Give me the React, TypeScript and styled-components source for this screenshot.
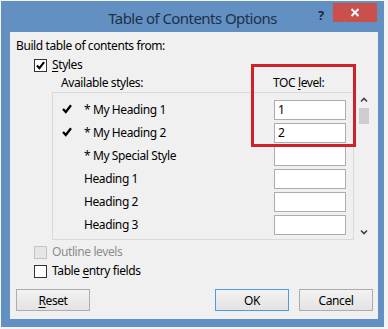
import React from "react";
import styled, { createGlobalStyle } from "styled-components";

const Global = createGlobalStyle`
  html, body { margin: 0; padding: 0; background: #f4f4f4; }
  body { font-family: "Noto Sans", "Liberation Sans", sans-serif; }
`;

const FONT = `"Noto Sans", "Liberation Sans", sans-serif`;

const Frame = styled.div`
  width: 383px;
  height: 326px;
  margin: 1px 0 0 1px;
  background: #6290c2;
  display: flex;
  flex-direction: column;
`;

const TitleBar = styled.div`
  height: 31px;
  flex: none;
  display: grid;
  grid-template-columns: 1fr auto 1fr;
  align-items: start;
`;

const Title = styled.div`
  grid-column: 2;
  font: 15px ${FONT};
  letter-spacing: -0.55px;
  color: #1d3148;
  line-height: 18px;
  padding-top: 8px;
  white-space: nowrap;
`;

const Controls = styled.div`
  grid-column: 3;
  justify-self: end;
  display: flex;
  align-items: start;
  padding: 2px 7px 0 0;
`;

const Help = styled.div`
  width: 24px;
  height: 19px;
  display: flex;
  align-items: center;
  justify-content: center;
  font: bold 13px ${FONT};
  color: #1d2b3a;
  padding-top: 4px;
  box-sizing: border-box;
`;

const Close = styled.div`
  width: 44px;
  height: 19px;
  background: #c9504b;
  display: flex;
  align-items: center;
  justify-content: center;
`;

const Body = styled.div`
  flex: 1;
  display: flex;
  padding: 0 9px 8px 9px;
`;

const Panel = styled.div`
  flex: 1;
  position: relative;
  background: #f0f0f0;
  display: flex;
  flex-direction: column;
  padding: 6px 5px 7px 6px;
  font: 12px ${FONT};
  letter-spacing: -0.4px;
  color: #000;
  & > * { flex: none; }
`;

const Line = styled.div<{ $mt?: number; $ml?: number; $disabled?: boolean }>`
  height: 16px;
  line-height: 16px;
  display: flex;
  align-items: center;
  margin-top: ${(p) => p.$mt ?? 0}px;
  margin-left: ${(p) => p.$ml ?? 0}px;
  color: ${(p) => (p.$disabled ? "#8c8c8c" : "#000")};
  white-space: nowrap;
`;

const Box = styled.span<{ $disabled?: boolean }>`
  width: 11px;
  height: 11px;
  border: 1px solid ${(p) => (p.$disabled ? "#c4c4c4" : "#333")};
  background: ${(p) => (p.$disabled ? "#e6e6e6" : "#fff")};
  display: inline-flex;
  align-items: center;
  justify-content: center;
  margin-right: 5px;
  flex: none;
`;

const Header = styled.div`
  height: 16px;
  line-height: 16px;
  margin-top: 2px;
  display: flex;
  white-space: nowrap;
`;

const HeaderLeft = styled.span`
  margin-left: 45px;
  width: 212px;
`;

const ListWrap = styled.div`
  margin-top: 1px;
  margin-left: 36px;
  display: flex;
`;

const ListBox = styled.div`
  width: 302px;
  height: 148px;
  border: 1px solid #d9d9d9;
  padding-top: 5px;
  box-sizing: border-box;
  display: flex;
  flex-direction: column;
  overflow: hidden;
`;

const Row = styled.div`
  height: 23px;
  flex: none;
  display: grid;
  grid-template-columns: 22px 1fr 72px;
  align-items: center;
  padding: 0 7px 0 9px;
  box-sizing: border-box;
  white-space: nowrap;
`;

const LevelInput = styled.div`
  height: 20px;
  box-sizing: border-box;
  border: 1px solid #abadb3;
  background: #fff;
  padding-left: 3px;
  line-height: 18px;
`;

const ScrollBar = styled.div`
  width: 18px;
  height: 148px;
  display: flex;
  flex-direction: column;
  align-items: center;
  margin-left: 1px;
`;

const Arrow = styled.div`
  height: 16px;
  display: flex;
  align-items: center;
  justify-content: center;
  width: 18px;
`;

const Track = styled.div`
  flex: 1;
  width: 18px;
  display: flex;
  flex-direction: column;
  align-items: center;
`;

const Thumb = styled.div`
  width: 10px;
  height: 16px;
  background: #cdcdcd;
`;

const Buttons = styled.div`
  margin-top: 10px;
  display: flex;
  gap: 10px;
`;

const Button = styled.div<{ $default?: boolean }>`
  width: 74px;
  height: 22px;
  box-sizing: border-box;
  border: 1px solid ${(p) => (p.$default ? "#4d9be0" : "#adadad")};
  background: linear-gradient(#f2f2f2, #e3e3e3);
  display: flex;
  align-items: center;
  justify-content: center;
  &:first-child { margin-right: auto; }
`;

const Highlight = styled.div`
  position: absolute;
  left: 241px;
  top: 32px;
  width: 105px;
  height: 83px;
  box-sizing: border-box;
  border: 3px solid #d0202a;
  pointer-events: none;
`;

const U = styled.span`
  text-decoration: underline;
  text-underline-offset: 2px;
`;

const Check = ({ size = 10 }: { size?: number }) => (
  <svg width={size} height={size} viewBox="0 0 10 10">
    <path d="M1 5 L3.8 8 L9 1.2" fill="none" stroke="#000" strokeWidth="2.3" />
  </svg>
);

const Chevron = ({ down }: { down?: boolean }) => (
  <svg width="8" height="6" viewBox="0 0 8 6">
    <path
      d={down ? "M1 1.5 L4 4.5 L7 1.5" : "M1 4.5 L4 1.5 L7 4.5"}
      fill="none"
      stroke="#404040"
      strokeWidth="1.6"
    />
  </svg>
);

const rows = [
  { mark: true, name: "* My Heading 1", level: "1" },
  { mark: true, name: "* My Heading 2", level: "2" },
  { mark: false, name: "* My Special Style", level: "" },
  { mark: false, name: "Heading 1", level: "" },
  { mark: false, name: "Heading 2", level: "" },
  { mark: false, name: "Heading 3", level: "" },
];

export default function App() {
  return (
    <>
      <Global />
      <Frame>
        <TitleBar>
          <Title>Table of Contents Options</Title>
          <Controls>
            <Help>?</Help>
            <Close>
              <svg width="10" height="9" viewBox="0 0 10 9">
                <path d="M1.5 1 L8.5 8 M8.5 1 L1.5 8" stroke="#fff" strokeWidth="2" />
              </svg>
            </Close>
          </Controls>
        </TitleBar>
        <Body>
          <Panel>
            <Line>Build table of contents from:</Line>
            <Line $mt={3} $ml={18}>
              <Box>
                <Check size={9} />
              </Box>
              <span>
                <U>S</U>tyles
              </span>
            </Line>
            <Header>
              <HeaderLeft>Available styles:</HeaderLeft>
              <span>
                TOC <U>l</U>evel:
              </span>
            </Header>
            <ListWrap>
              <ListBox>
                {rows.map((r) => (
                  <Row key={r.name}>
                    <span>{r.mark ? <Check /> : null}</span>
                    <span>{r.name}</span>
                    <LevelInput>{r.level}</LevelInput>
                  </Row>
                ))}
              </ListBox>
              <ScrollBar>
                <Arrow>
                  <Chevron />
                </Arrow>
                <Track>
                  <Thumb />
                </Track>
                <Arrow>
                  <Chevron down />
                </Arrow>
              </ScrollBar>
            </ListWrap>
            <Line $mt={4} $ml={18} $disabled>
              <Box $disabled />
              <span>Outline levels</span>
            </Line>
            <Line $mt={3} $ml={18}>
              <Box />
              <span>
                Table <U>e</U>ntry fields
              </span>
            </Line>
            <Buttons>
              <Button>
                <span>
                  <U>R</U>eset
                </span>
              </Button>
              <Button $default>OK</Button>
              <Button>Cancel</Button>
            </Buttons>
            <Highlight />
          </Panel>
        </Body>
      </Frame>
    </>
  );
}
